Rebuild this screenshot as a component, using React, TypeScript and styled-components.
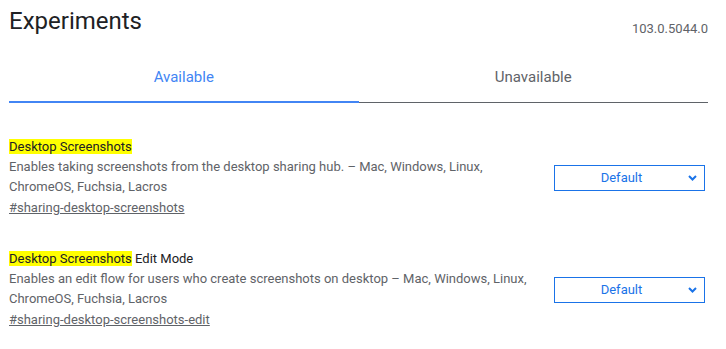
import React, { useState } from "react";
import styled, { createGlobalStyle } from "styled-components";

const GlobalStyle = createGlobalStyle`
  body {
    margin: 0;
    background: #fff;
    font-family: Roboto, "Noto Sans", Arial, sans-serif;
  }
`;

const Page = styled.div`
  padding: 0 18px 0 9px;
`;

const Header = styled.header`
  display: flex;
  justify-content: space-between;
  align-items: flex-end;
  padding-top: 5px;
`;

const Title = styled.h1`
  margin: 0;
  font-size: 24px;
  line-height: 32px;
  font-weight: 400;
  color: #202124;
`;

const Version = styled.div`
  font-size: 13px;
  line-height: 16px;
  color: #5f6368;
`;

const TabList = styled.div`
  display: flex;
  margin-top: 12px;
  border-bottom: 1px solid #5f6368;
`;

const Tab = styled.button<{ $active?: boolean }>`
  flex: 1;
  background: none;
  border: 0;
  border-bottom: 2px solid ${(p) => (p.$active ? "#4285f4" : "transparent")};
  margin-bottom: -1px;
  padding: 18px 0 14px;
  font-family: inherit;
  font-size: 15px;
  line-height: 20px;
  color: ${(p) => (p.$active ? "#4285f4" : "#5f6368")};
  cursor: pointer;
`;

const Experiment = styled.div`
  display: flex;
  align-items: center;
  margin-top: 31px;

  &:first-child {
    margin-top: 34px;
  }
`;

const Text = styled.div`
  flex: 1;
  margin-right: 12px;
`;

const Name = styled.h2`
  margin: 0;
  font-size: 13px;
  line-height: 20px;
  font-weight: 400;
  color: #202124;

  mark {
    background: #ffff00;
    color: inherit;
  }
`;

const Description = styled.p`
  margin: 0;
  font-size: 13px;
  line-height: 19.5px;
  color: #5f6368;
`;

const Permalink = styled.a`
  display: block;
  margin-top: 2px;
  font-size: 13px;
  line-height: 20px;
  color: #5f6368;
  text-decoration: underline;
`;

const SelectWrap = styled.div`
  position: relative;
  margin-right: 3px;
`;

const Select = styled.select`
  appearance: none;
  width: 151px;
  height: 26px;
  padding: 0 20px 0 4px;
  border: 1px solid #1a73e8;
  border-radius: 0;
  background: #fff;
  color: #1a73e8;
  font-family: inherit;
  font-size: 13px;
  text-align-last: center;
  outline: none;
`;

const Chevron = styled.svg`
  position: absolute;
  right: 8px;
  top: 10px;
  pointer-events: none;
`;

const experiments = [
  {
    name: "Desktop Screenshots",
    rest: "",
    desc: "Enables taking screenshots from the desktop sharing hub. – Mac, Windows, Linux, ChromeOS, Fuchsia, Lacros",
    link: "#sharing-desktop-screenshots",
  },
  {
    name: "Desktop Screenshots",
    rest: " Edit Mode",
    desc: "Enables an edit flow for users who create screenshots on desktop – Mac, Windows, Linux, ChromeOS, Fuchsia, Lacros",
    link: "#sharing-desktop-screenshots-edit",
  },
];

export default function App() {
  const [tab, setTab] = useState("available");

  return (
    <Page>
      <GlobalStyle />
      <Header>
        <Title>Experiments</Title>
        <Version>103.0.5044.0</Version>
      </Header>

      <TabList>
        <Tab $active={tab === "available"} onClick={() => setTab("available")}>
          Available
        </Tab>
        <Tab
          $active={tab === "unavailable"}
          onClick={() => setTab("unavailable")}
        >
          Unavailable
        </Tab>
      </TabList>

      <div>
        {experiments.map((exp) => (
          <Experiment key={exp.link}>
            <Text>
              <Name>
                <mark>{exp.name}</mark>
                {exp.rest}
              </Name>
              <Description>{exp.desc}</Description>
              <Permalink href={exp.link}>{exp.link}</Permalink>
            </Text>
            <SelectWrap>
              <Select defaultValue="default">
                <option value="default">Default</option>
                <option value="enabled">Enabled</option>
                <option value="disabled">Disabled</option>
              </Select>
              <Chevron width="9" height="6" viewBox="0 0 9 6">
                <path
                  d="M1 1 L4.5 4.5 L8 1"
                  fill="none"
                  stroke="#1a73e8"
                  strokeWidth="2"
                />
              </Chevron>
            </SelectWrap>
          </Experiment>
        ))}
      </div>
    </Page>
  );
}
